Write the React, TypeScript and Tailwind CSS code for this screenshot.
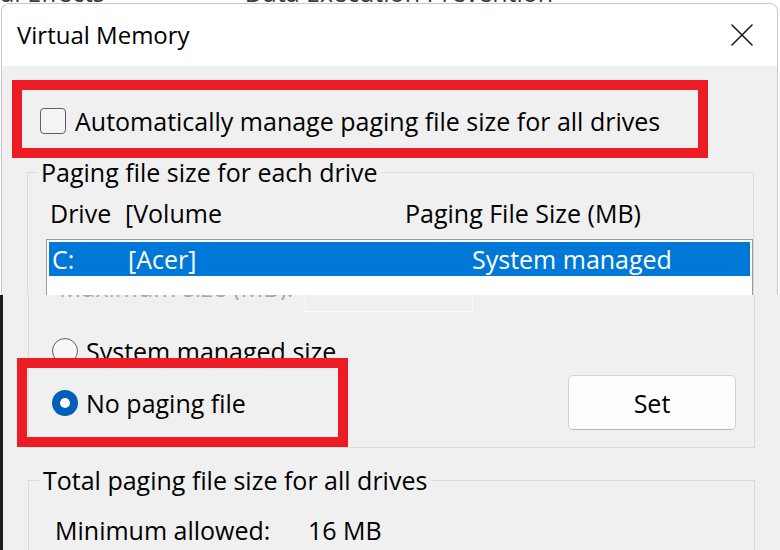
function Radio({ checked }: { checked?: boolean }) {
  if (checked) {
    return (
      <span className="flex h-[26px] w-[26px] shrink-0 items-center justify-center rounded-full bg-[#005fb8]">
        <span className="h-[10px] w-[10px] rounded-full bg-white" />
      </span>
    );
  }
  return <span className="h-[26px] w-[26px] shrink-0 rounded-full border-[1.5px] border-[#5f5f5f] bg-[#f7f7f7]" />;
}

function CloseIcon() {
  return (
    <svg width="22" height="22" viewBox="0 0 22 22" fill="none" stroke="#1b1b1b" strokeWidth="1.6" strokeLinecap="round">
      <path d="M1 1L21 21M21 1L1 21" />
    </svg>
  );
}

export default function App() {
  return (
    <div className="relative h-[550px] w-[780px] overflow-hidden bg-white font-['Open_Sans',sans-serif] text-[25px] leading-[26px] text-black">
      {/* window behind, only the bottoms of its tab labels show */}
      <div className="flex h-[3px] overflow-hidden text-[#3a3a3a]">
        <div className="-mt-[21px] flex shrink-0">
          <span className="-ml-[48px]">Visual Effects</span>
          <span className="ml-[140px]">Data Execution Prevention</span>
        </div>
      </div>

      {/* upper part of the dialog */}
      <div className="h-[292px] overflow-hidden">
        <div className="ml-[1px] w-[777px] rounded-t-[8px] border border-[#c9c9c9] bg-[#f0f0f0]">
          <div className="flex h-[62px] items-center justify-between rounded-t-[8px] bg-white pl-[15px] pr-[24px]">
            <span className="text-[24px]">Virtual Memory</span>
            <CloseIcon />
          </div>

          <div className="pt-[42px]">
            <div className="flex h-[26px] items-center gap-[9px] pl-[38px]">
              <span className="h-[26px] w-[26px] rounded-[4px] border-[1.5px] border-[#606060] bg-[#f4f4f4]" />
              <span>Automatically manage paging file size for all drives</span>
            </div>

            <fieldset className="ml-[25px] mt-[25px] w-[727px] border border-[#dcdcdc]">
              <legend className="ml-[9px] px-[4px]">Paging file size for each drive</legend>
              <div className="flex pl-[22px] pt-[15px]">
                <span className="w-[75px]">Drive</span>
                <span className="w-[280px]">[Volume</span>
                <span>Paging File Size (MB)</span>
              </div>
              <div className="ml-[18px] mt-[13px] h-[90px] border border-[#9a9a9a] bg-white p-[2px]">
                <div className="flex h-[34px] items-center bg-[#0078d7] pl-[3px] leading-[34px] text-white">
                  <span className="w-[76px]">C:</span>
                  <span className="w-[344px]">[Acer]</span>
                  <span>System managed</span>
                </div>
              </div>
            </fieldset>
          </div>
        </div>
      </div>

      {/* lower part of the dialog (scrolled view) */}
      <div className="flex h-[255px] bg-[#f0f0f0]">
        <div className="w-[3px] shrink-0 bg-[#1c1c1c]" />
        <div className="flex-1">
          <div className="ml-[25px] w-[727px] border border-t-0 border-[#dcdcdc] pb-[17px]">
            <div className="flex h-[17px]">
              <div className="flex h-[5px] w-[276px] overflow-hidden pl-[30px] text-[#a8a8a8]">
                <span className="-mt-[21px] shrink-0">Maximum size (MB):</span>
              </div>
              <div className="w-[168px] border border-t-0 border-[#fafafa]" />
            </div>

            <div className="mt-[26px] flex h-[26px] items-center gap-[8px] pl-[23px]">
              <Radio />
              <span>System managed size</span>
            </div>

            <div className="mt-[11px] flex h-[55px] items-center justify-between pl-[23px] pr-[18px]">
              <div className="flex items-center gap-[8px]">
                <Radio checked />
                <span>No paging file</span>
              </div>
              <button className="h-[55px] w-[168px] rounded-[5px] border border-[#d3d3d3] border-b-[#b9b9b9] bg-[#fdfdfd] text-black">
                Set
              </button>
            </div>
          </div>

          <fieldset className="ml-[25px] mt-[19px] h-[200px] w-[727px] border border-[#dcdcdc]">
            <legend className="ml-[10px] px-[4px]">Total paging file size for all drives</legend>
            <div className="flex pl-[26px] pt-[24px]">
              <span className="w-[253px]">Minimum allowed:</span>
              <span>16 MB</span>
            </div>
          </fieldset>
        </div>
      </div>

      {/* red highlight boxes drawn over the screenshot */}
      <div className="absolute left-[12px] top-[80px] h-[78px] w-[696px] border-[10px] border-[#ed1c24]" />
      <div className="absolute left-[17px] top-[358px] h-[89px] w-[331px] border-[10px] border-[#ed1c24]" />
    </div>
  );
}
